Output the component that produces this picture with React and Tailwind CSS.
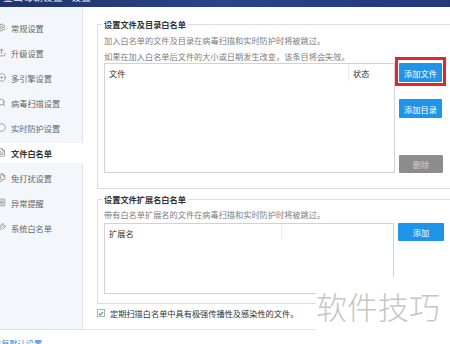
import { Settings, Upload, Disc, Search, MessageCircle, FileText, Files, SquareMenu, Wrench } from 'lucide-react';

const navItems = [
  { label: '常规设置', Icon: Settings },
  { label: '升级设置', Icon: Upload },
  { label: '多引擎设置', Icon: Disc },
  { label: '病毒扫描设置', Icon: Search },
  { label: '实时防护设置', Icon: MessageCircle },
  { label: '文件白名单', Icon: FileText, active: true },
  { label: '免打扰设置', Icon: Files },
  { label: '异常提醒', Icon: SquareMenu },
  { label: '系统白名单', Icon: Wrench },
];

const Sidebar = () => (
  <div className="w-[83px] shrink-0 bg-[#f3f7fc] border-r border-[#dfe6ee] pt-[8px]">
    {navItems.map(({ label, Icon, active }) => (
      <div
        key={label}
        className={
          active
            ? 'flex items-center h-[20px] my-[2.5px] w-[84px] bg-white text-[#333] font-bold'
            : 'flex items-center h-[25px] text-[#666]'
        }
      >
        <Icon size={9} strokeWidth={1.8} className="-ml-[3px] shrink-0 text-[#777]" />
        <span className="ml-[5px] whitespace-nowrap">{label}</span>
      </div>
    ))}
  </div>
);

const BlueBtn = ({ children, className = '' }) => (
  <div className={`h-[19px] w-[43px] flex items-center justify-center bg-[#1f95ea] text-white rounded-[1px] ${className}`}>
    {children}
  </div>
);

export default function App() {
  return (
    <div className="relative w-[450px] h-[344px] overflow-hidden bg-white text-[8.2px] leading-[10px] font-['Noto_Sans_CJK_SC',sans-serif]">
      <div className="h-[7px] bg-gradient-to-r from-[#1f346c] via-[#2a4488] to-[#22397a] overflow-hidden">
        <div className="-mt-[8px] ml-[3px] text-[10px] leading-[10px] text-[#dfe6f5] whitespace-nowrap">
          金山毒霸设置 <span className="ml-[6px]">设置</span>
        </div>
      </div>

      <div className="flex h-[322px]">
        <Sidebar />

        <div className="flex-1 overflow-hidden pt-[12px] pl-[14px]">
          {/* file & folder whitelist */}
          <fieldset className="w-[370px] border border-[#dcdcdc] pl-[6px] pb-[15px]">
            <legend className="px-[2px] -ml-[2px] font-bold text-[#333] leading-[10px]">设置文件及目录白名单</legend>
            <div className="mt-[5px] leading-[13px] text-[#7d7d7d] whitespace-nowrap">加入白名单的文件及目录在病毒扫描和实时防护时将被跳过。</div>
            <div className="mt-[3px] leading-[13px] text-[#7d7d7d] whitespace-nowrap">如果在加入白名单后文件的大小或日期发生改变，该条目将会失效。</div>
            <div className="flex">
              <div className="w-[291px] h-[110px] border border-[#d2d2d2] flex items-start">
                <div className="flex-1 pl-[4px] h-[17px] flex items-center text-[#333]">文件</div>
                <div className="w-[46px] h-[17px] border-l border-[#ececec] pl-[4px] flex items-center text-[#333]">状态</div>
              </div>
              <div className="ml-[4px] w-[44px] flex flex-col">
                <div className="relative">
                  <BlueBtn>添加文件</BlueBtn>
                  <span className="absolute -left-[4px] -top-[6px] w-[51px] h-[29px] border-[3px] border-[#e5242b]" />
                </div>
                <BlueBtn className="mt-[17px] h-[18px]">添加目录</BlueBtn>
                <div className="mt-auto h-[18px] w-[44px] flex items-center justify-center bg-[#8c8c8c] text-[#cfcfcf] rounded-[1px]">删除</div>
              </div>
            </div>
          </fieldset>

          {/* extension whitelist */}
          <fieldset className="mt-[5px] w-[370px] border border-[#dcdcdc] pl-[6px] pb-[9px]">
            <legend className="px-[2px] -ml-[2px] font-bold text-[#333] leading-[10px]">设置文件扩展名白名单</legend>
            <div className="mt-[4px] leading-[13px] text-[#7d7d7d] whitespace-nowrap">带有白名单扩展名的文件在病毒扫描和实时防护时将被跳过。</div>
            <div className="flex mt-[2px]">
              <div className="w-[290px] h-[71px] border border-[#d2d2d2] flex items-start">
                <div className="w-[176px] pl-[4px] h-[17px] flex items-center text-[#333]">扩展名</div>
                <div className="h-[16px] border-l border-[#f0f0f0]" />
              </div>
              <div className="ml-[4px] w-[46px]">
                <div className="h-[18px] w-[46px] flex items-center justify-center bg-[#1f95ea] text-white rounded-[1px]">添加</div>
              </div>
            </div>
          </fieldset>

          <div className="mt-[4px] flex items-center h-[10px]">
            <span className="w-[8px] h-[8px] border border-[#aab3bd] bg-white flex items-center justify-center">
              <svg viewBox="0 0 8 8" className="w-[7px] h-[7px]">
                <path d="M1.2 4.2 L3.1 6 L6.8 1.8" fill="none" stroke="#3fa34d" strokeWidth="1.4" />
              </svg>
            </span>
            <span className="ml-[5px] text-[#333] whitespace-nowrap">定期扫描白名单中具有极强传播性及感染性的文件。</span>
          </div>
        </div>
      </div>

      <div className="border-t border-[#e2e2e2] pt-[8px]">
        <span className="-ml-[7px] inline-block text-[#2f7fd8] whitespace-nowrap">恢复默认设置</span>
      </div>

      {/* watermark */}
      <div className="absolute left-[316px] top-[277px] w-[140px] h-[56px] bg-white flex items-center">
        <span className="text-[31px] leading-[31px] font-light text-[#c6c6c6] whitespace-nowrap">软件技巧</span>
      </div>
    </div>
  );
}
